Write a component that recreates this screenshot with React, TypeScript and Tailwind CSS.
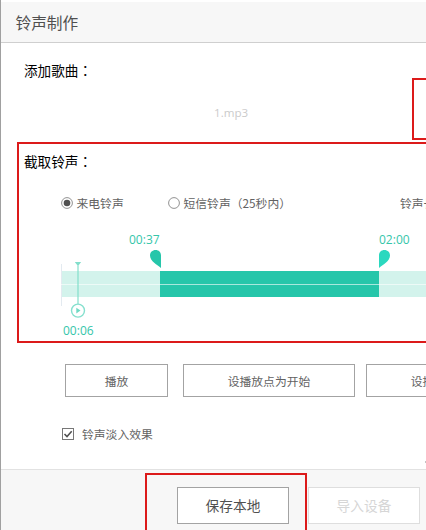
import type { ReactNode } from "react"

function Radio({ checked, children }: { checked?: boolean; children: ReactNode }) {
  return (
    <label className="flex items-center gap-[3.5px] whitespace-nowrap">
      <svg width="12" height="12" viewBox="0 0 12 12" fill="none">
        <circle cx="6" cy="6" r="5.4" fill="#fff" stroke="#929292" />
        {checked && <circle cx="6" cy="6" r="3.3" fill="#505050" />}
      </svg>
      <span>{children}</span>
    </label>
  )
}

// punctuation centred in its em box
function Punct({ children }: { children: ReactNode }) {
  return <span lang="zh-TW" className="font-['Noto_Sans_CJK_TC',sans-serif]">{children}</span>
}

function Pin({ side, className }: { side: "start" | "end"; className: string }) {
  return (
    <svg width="11" height="18" viewBox="0 0 11 18" className={className}>
      {side === "start" ? (
        <path d="M11 18C7.5 15 0 11.5 0 5.6C0 2.2 2.4 0 5.6 0C8.8 0 11 2.2 11 5.4Z" fill="#26c6aa" />
      ) : (
        <path d="M0 18C3.5 15 11 11.5 11 5.6C11 2.2 8.6 0 5.4 0C2.2 0 0 2.2 0 5.4Z" fill="#2bd8bf" />
      )}
    </svg>
  )
}

function Timeline() {
  return (
    <div className="relative mt-[20px] ml-[60px] h-[108px] font-['Open_Sans','Noto_Sans',sans-serif] text-[12px] leading-[16px] text-[#35c6aa]">
      <span className="absolute top-px left-[68px]">00:37</span>
      <span className="absolute top-px left-[318px]">02:00</span>
      <Pin side="start" className="absolute top-[19px] left-[89px]" />
      <Pin side="end" className="absolute top-[19px] left-[318px]" />
      <div className="absolute top-[33px] left-0 h-[42px] w-px bg-[#e3eaf0]" />
      <div className="flex h-[66px] pt-[40px]">
        <div className="w-[99px] bg-[#d3f3ec]" />
        <div className="w-[219px] bg-[#26c6aa]" />
        <div className="flex-1 bg-[#d3f3ec]" />
      </div>
      <div className="absolute top-[53px] left-0 h-px w-full bg-white/60" />
      {/* playhead */}
      <svg width="16" height="58" viewBox="0 0 16 58" fill="none" className="absolute top-[31px] left-[9px]">
        <path d="M4.8 0H11.2L8.8 3H7.2Z" fill="#83decb" />
        <path d="M8 2V42" stroke="#83e0cc" strokeWidth="1.2" />
        <circle cx="8" cy="48.6" r="6.5" fill="#fff" stroke="#86e0ce" strokeWidth="1.4" />
        <path d="M6.3 45.8L10.5 48.6L6.3 51.4Z" fill="#6fdac4" />
      </svg>
      <span className="absolute top-[92px] left-[2px]">00:06</span>
    </div>
  )
}

function Button({ className, children }: { className: string; children: ReactNode }) {
  return (
    <button className={`flex shrink-0 items-center justify-center border bg-white whitespace-nowrap ${className}`}>
      {children}
    </button>
  )
}

export default function App() {
  return (
    <div className="relative flex h-[530px] w-[426px] flex-col overflow-hidden border-l border-[#a0a0a0] bg-white font-['Noto_Sans_CJK_SC',sans-serif] text-[11.8px] text-[#626262]">
      <header className="mt-[2px] flex h-[41px] shrink-0 items-center border-b border-[#cfcfcf] bg-[#f7f7f7] pl-[14.5px] text-[15.7px] text-[#505050]">
        <span className="mt-[2px]">铃声制作</span>
      </header>

      <main className="h-[426px] shrink-0">
        <h2 className="mt-[17px] ml-[23px] h-[20px] text-[13.6px] leading-[20px] text-black">
          添加歌曲<Punct>：</Punct>
        </h2>
        <p className="mt-[25px] ml-[213px] h-[16px] font-['Open_Sans','Noto_Sans',sans-serif] text-[11.6px] leading-[16px] font-medium text-[#cbcbcb]">
          1.mp3
        </p>

        <h2 className="mt-[30px] ml-[23px] h-[20px] text-[13.6px] leading-[20px] text-black">
          截取铃声<Punct>：</Punct>
        </h2>
        <div className="mt-[23px] ml-[60px] flex h-[17px] items-center">
          <div className="w-[107px] shrink-0">
            <Radio checked>来电铃声</Radio>
          </div>
          <div className="w-[232px] shrink-0">
            <Radio>
              短信铃声<Punct>（</Punct>25秒内<Punct>）</Punct>
            </Radio>
          </div>
          <span className="shrink-0">铃声长度</span>
        </div>

        <Timeline />

        <div className="mt-[25px] ml-[64px] flex">
          <Button className="h-[33px] w-[103px] border-[#a3a3a3]">播放</Button>
          <Button className="ml-[15px] h-[33px] w-[172px] border-[#a3a3a3]">设播放点为开始</Button>
          <Button className="ml-[11px] h-[33px] w-[172px] border-[#a3a3a3]">设播放点为结束</Button>
        </div>

        <label className="mt-[28px] ml-[61px] flex h-[18px] items-center gap-[8px]">
          <svg width="12" height="12" viewBox="0 0 12 12" fill="none">
            <rect x="0.5" y="0.5" width="11" height="11" fill="#fff" stroke="#777" />
            <path d="M2.5 6L5 8.6L9.7 3.2" stroke="#505050" strokeWidth="1.5" />
          </svg>
          铃声淡入效果
        </label>
      </main>

      <footer className="flex flex-1 gap-[19px] border-t border-[#e2e2e2] bg-[#f7f7f7] pt-[17px] pl-[176px] text-[13.7px]">
        <Button className="h-[37px] w-[112px] border-[#a3a3a3] text-[#505050]">保存本地</Button>
        <Button className="h-[37px] w-[112px] border-[#dedede] text-[#d6d6d6]">导入设备</Button>
      </footer>

      {/* bits of the window behind and the resize grip */}
      <div className="absolute top-[7px] -left-px h-[9px] w-px bg-[#4a4a4a]" />
      <div className="absolute top-[461px] right-0 h-[2px] w-px bg-[#c4c4c4]" />

      {/* highlight frames */}
      <div className="absolute top-[78px] left-[411px] h-[62px] w-[30px] border-2 border-[#dc1a1a]" />
      <div className="absolute top-[142px] left-[16px] h-[201px] w-[430px] border-2 border-[#dc1a1a]" />
      <div className="absolute top-[473px] left-[144px] h-[80px] w-[162px] border-2 border-[#dc1a1a]" />
    </div>
  )
}
